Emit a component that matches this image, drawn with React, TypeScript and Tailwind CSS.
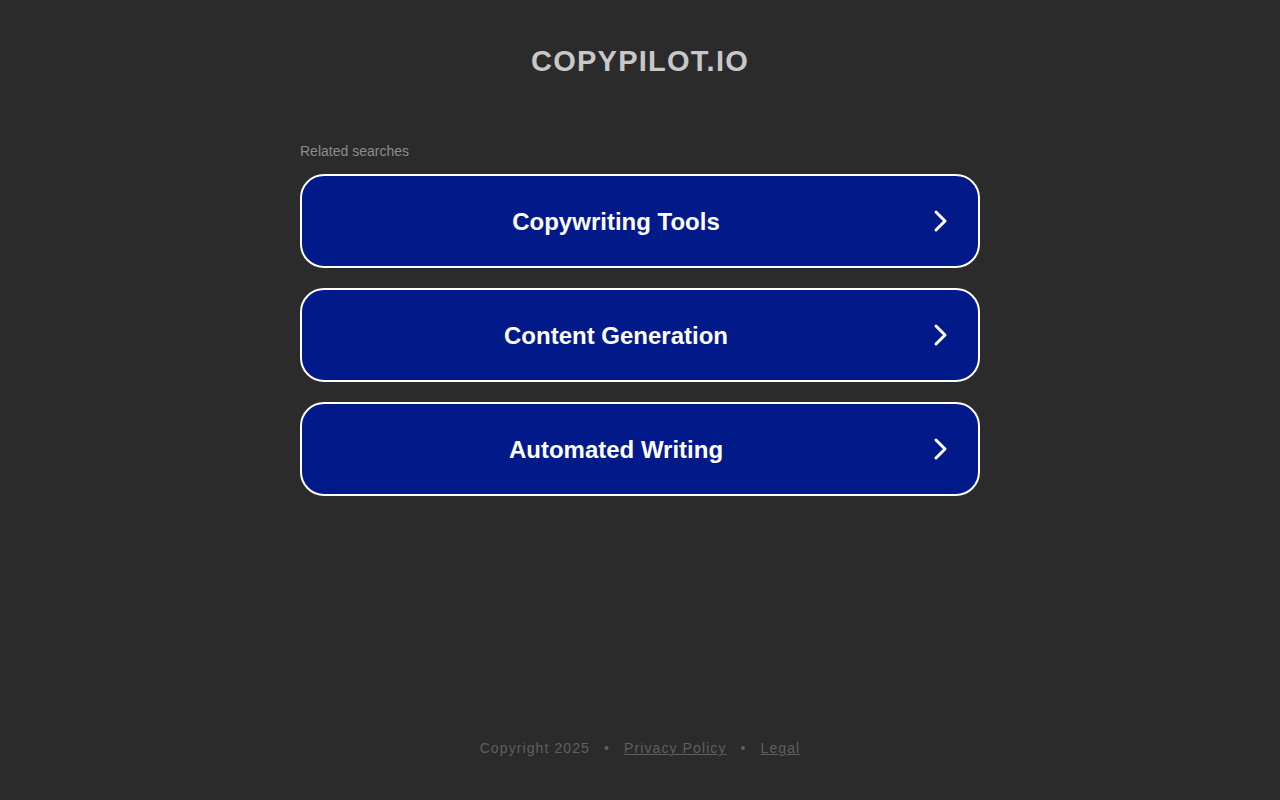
import React from "react";

const items = ["Copywriting Tools", "Content Generation", "Automated Writing"];

function Chevron() {
  return (
    <svg width="16" height="24" viewBox="0 0 16 24" className="shrink-0">
      <path d="M4 3 L13 12 L4 21" fill="none" stroke="white" strokeWidth="3" strokeLinecap="round" strokeLinejoin="round" />
    </svg>
  );
}

export default function App() {
  return (
    <div className="min-h-[800px] w-full bg-[#2b2b2b] flex flex-col items-center" style={{ fontFamily: '"Liberation Sans", Arial, sans-serif' }}>
      <h1 className="mt-[43px] text-[29px] leading-[36px] font-bold text-[#c8c8c8] tracking-[1.25px]">COPYPILOT.IO</h1>
      <div className="mt-[63px] w-[680px]">
        <div className="text-[14px] leading-[18px] text-[#8c8c8c]">Related searches</div>
        <div className="mt-[14px] flex flex-col gap-[20px]">
          {items.map((t) => (
            <div key={t} className="h-[94px] rounded-[24px] border-2 border-white bg-[#021989] flex items-center">
              <div className="flex-1 pr-[2px] pt-[2px] text-center text-[24px] font-bold text-white">{t}</div>
              <div className="mr-[30px]"><Chevron /></div>
            </div>
          ))}
        </div>
      </div>
      <div className="mt-auto mb-[43px] flex items-center text-[14px] leading-[18px] text-[#5f5f5f] tracking-[1.1px]">
        <span>Copyright 2025</span>
        <span className="mx-[14px]">•</span>
        <span className="underline">Privacy Policy</span>
        <span className="mx-[14px]">•</span>
        <span className="underline">Legal</span>
      </div>
    </div>
  );
}
